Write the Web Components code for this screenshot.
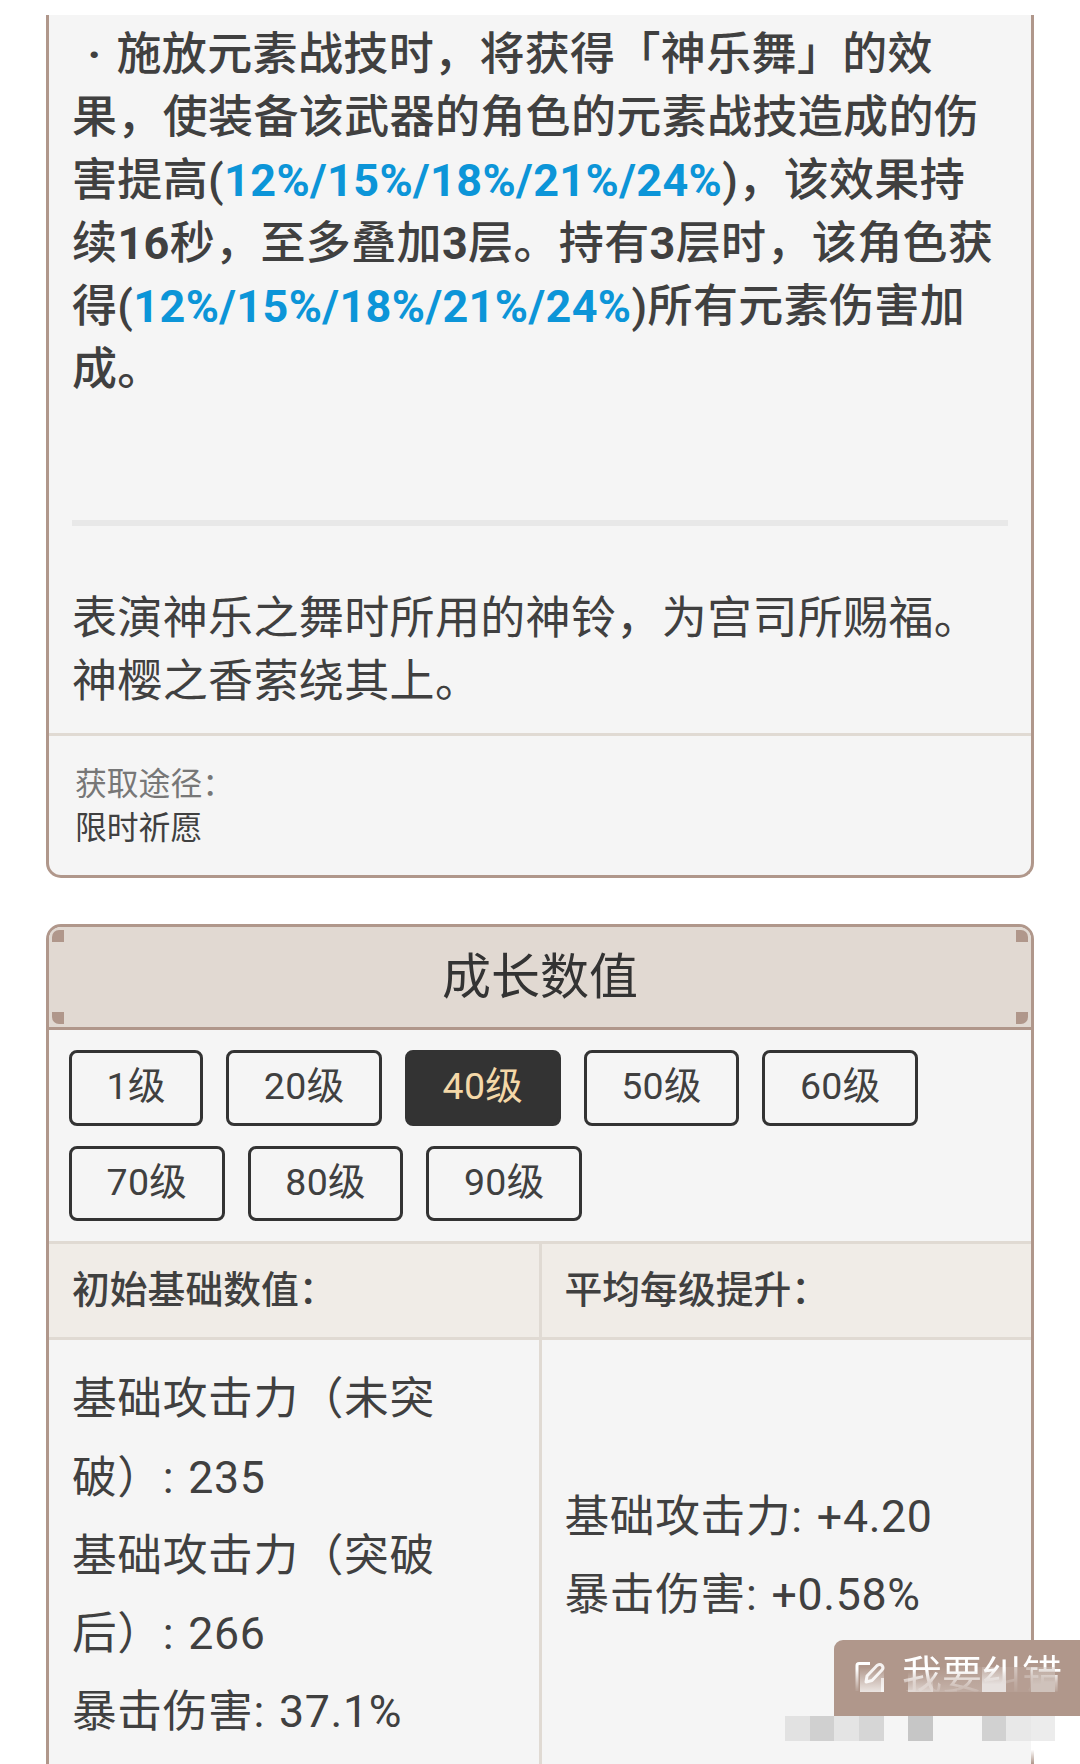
<!DOCTYPE html>
<html lang="zh-CN">
<head>
<meta charset="utf-8">
<title>成长数值</title>
<style>
    body {
        margin: 0;
        width: 1080px;
        height: 1764px;
        overflow: hidden;
        position: relative;
        background: #fff;
        color: #404040;
        font-family: Roboto, "Noto Sans CJK SC", sans-serif;
    }
    main {
        display: flex;
        flex-direction: column;
        gap: 46px;
        padding: 15px 46px 0;
    }
    b {
        color: #0c95d8;
    }
    .dot {
        margin: 0 15px 0 4px;
        font-weight: 700;
    }
</style>
</head>
<body>
<main>
    <weapon-card>
        <span slot="effect">&nbsp;<span class="dot">·</span>施放元素战技时，将获得「神乐舞」的效<br>果，使装备该武器的角色的元素战技造成的伤<br>害提高(<b>12%/15%/18%/21%/24%</b>)，该效果持<br>续<strong>16</strong>秒，至多叠加<strong>3</strong>层。持有<strong>3</strong>层时，该角色获<br>得(<b>12%/15%/18%/21%/24%</b>)所有元素伤害加<br>成。</span>
        <span slot="story">表演神乐之舞时所用的神铃，为宫司所赐福。<br>神樱之香萦绕其上。</span>
        <span slot="source-label">获取途径：</span>
        <span slot="source">限时祈愿</span>
    </weapon-card>
    <growth-card heading="成长数值">
        <level-tab slot="tabs">1级</level-tab>
        <level-tab slot="tabs">20级</level-tab>
        <level-tab slot="tabs" active>40级</level-tab>
        <level-tab slot="tabs">50级</level-tab>
        <level-tab slot="tabs">60级</level-tab>
        <level-tab slot="tabs">70级</level-tab>
        <level-tab slot="tabs">80级</level-tab>
        <level-tab slot="tabs">90级</level-tab>
        <stat-column label="初始基础数值：">基础攻击力（未突<br>破）: 235<br>基础攻击力（突破<br>后）: 266<br>暴击伤害: 37.1%</stat-column>
        <stat-column label="平均每级提升：">基础攻击力: +4.20<br>暴击伤害: +0.58%</stat-column>
    </growth-card>
</main>
<report-button>我要纠错</report-button>

<script>
class WeaponCard extends HTMLElement {
    constructor() {
        super();
        this.shadowDOM = this.attachShadow({ mode: "open" });
        this.render();
    }

    render() {
        this.shadowDOM.innerHTML = `
        <style>
        :host {
            display: block;
            box-sizing: border-box;
            height: 863px;
            border: 3px solid #b0978b;
            border-top: none;
            border-radius: 0 0 15px 15px;
            background: #f5f5f5;
            white-space: nowrap;
        }
        .body {
            box-sizing: border-box;
            height: 718px;
            padding: 8px 23px 0;
            font-size: 45px;
            letter-spacing: 0.36px;
            line-height: 63px;
        }
        .effect {
            height: 497px;
            font-weight: 500;
        }
        hr {
            height: 6px;
            margin: 0 0 61px;
            border: none;
            background: #e8e8e8;
        }
        .source {
            padding: 26px 26px 0;
            border-top: 3px solid #e0dad3;
            font-size: 31.8px;
            line-height: 44px;
        }
        .label {
            color: #777;
        }
        </style>
        <div class="body">
            <div class="effect"><slot name="effect"></slot></div>
            <hr>
            <div class="story"><slot name="story"></slot></div>
        </div>
        <div class="source">
            <div class="label"><slot name="source-label"></slot></div>
            <div><slot name="source"></slot></div>
        </div>
        `;
    }
}

class GrowthCard extends HTMLElement {
    constructor() {
        super();
        this.shadowDOM = this.attachShadow({ mode: "open" });
    }

    connectedCallback() {
        this.render();
    }

    render() {
        this.shadowDOM.innerHTML = `
        <style>
        :host {
            display: block;
            border: 3px solid #b0978b;
            border-radius: 15px 15px 0 0;
            background: #f5f5f5;
            overflow: hidden;
        }
        header {
            display: flex;
            justify-content: space-between;
            height: 94px;
            padding: 3px;
            border-bottom: 3px solid #b0978b;
            background: #e1d9d2;
        }
        h2 {
            margin: 0;
            color: #333;
            font-size: 49px;
            font-weight: 400;
            line-height: 96px;
        }
        .ends {
            display: flex;
            flex-direction: column;
            justify-content: space-between;
        }
        .ends i {
            width: 12px;
            height: 12px;
            background: #b0978b;
        }
        .left i:first-child { border-top-left-radius: 7px; }
        .left i:last-child { border-bottom-left-radius: 7px; }
        .right i:first-child { border-top-right-radius: 7px; }
        .right i:last-child { border-bottom-right-radius: 7px; }
        .tabs {
            display: flex;
            flex-wrap: wrap;
            gap: 20px 23px;
            padding: 20px;
        }
        .table {
            display: grid;
            grid-template-columns: 492.5px 1fr;
            height: 531px;
            border-top: 3px solid #e0dad3;
        }
        </style>
        <header>
            <div class="ends left"><i></i><i></i></div>
            <h2>${this.getAttribute("heading")}</h2>
            <div class="ends right"><i></i><i></i></div>
        </header>
        <div class="tabs"><slot name="tabs"></slot></div>
        <div class="table"><slot></slot></div>
        `;
    }
}

class LevelTab extends HTMLElement {
    constructor() {
        super();
        this.shadowDOM = this.attachShadow({ mode: "open" });
        this.shadowDOM.innerHTML = `
        <style>
        :host {
            box-sizing: border-box;
            display: block;
            height: 75.5px;
            padding: 0 34.5px;
            border: 3px solid #333;
            border-radius: 8px;
            font-size: 37.5px;
            letter-spacing: 0.35px;
            line-height: 67px;
            white-space: nowrap;
        }
        :host([active]) {
            background: #333;
            color: #f4d8a8;
        }
        </style>
        <slot></slot>
        `;
    }
}

class StatColumn extends HTMLElement {
    constructor() {
        super();
        this.shadowDOM = this.attachShadow({ mode: "open" });
    }

    connectedCallback() {
        this.shadowDOM.innerHTML = `
        <style>
        :host {
            display: flex;
            flex-direction: column;
            white-space: nowrap;
        }
        :host(:first-of-type) {
            border-right: 3px solid #e0dad3;
        }
        .head {
            height: 93px;
            padding-left: 23px;
            border-bottom: 3px solid #e0dad3;
            background: #f0ece7;
            font-size: 37.8px;
            font-weight: 500;
            line-height: 93px;
        }
        .values {
            flex: 1;
            display: flex;
            align-items: center;
            padding: 0 0 3px 23px;
            font-size: 44.7px;
            letter-spacing: 0.66px;
            word-spacing: 2.4px;
            line-height: 78.2px;
        }
        </style>
        <div class="head">${this.getAttribute("label")}</div>
        <div class="values"><div><slot></slot></div></div>
        `;
    }
}

class ReportButton extends HTMLElement {
    constructor() {
        super();
        this.shadowDOM = this.attachShadow({ mode: "open" });
        // mosaic tiles over the button and under it: x, y, width, fill
        const tiles = [
            [74, 27, 25, "linear-gradient(#fff0 20%, #fff9)"],
            [99, 27, 24, "linear-gradient(#fff0, #fff4)"],
            [123, 27, 25, "linear-gradient(#fff1, #fff3)"],
            [148, 27, 24, "linear-gradient(#fff3, #e6e0de 70%)"],
            [172, 27, 25, "#b9a298aa"],
            [197, 27, 24, "linear-gradient(#cfc2bb66, #cfc2bb 70%)"],
            [-49, 76, 25, "#e2e2e2"],
            [-24, 76, 24, "#d0d0d0"],
            [0, 76, 25, "#e4e4e4"],
            [25, 76, 25, "#d6d6d6"],
            [74, 76, 25, "#c6c6c6"],
            [148, 76, 24, "#d1d1d1"],
            [172, 76, 25, "#e8e8e8"],
            [197, 76, 24, "#ececec"]
        ];
        this.shadowDOM.innerHTML = `
        <style>
        :host {
            position: absolute;
            left: 834px;
            top: 1640px;
            width: 246px;
            height: 76px;
            color: #fff;
        }
        .button {
            display: flex;
            align-items: center;
            gap: 15px;
            height: 72px;
            padding: 0 0 4px 21px;
            border-radius: 9px 0 0 0;
            background: #b0978b;
            font-size: 40px;
            white-space: nowrap;
        }
        .text {
            line-height: 66px;
            -webkit-mask-image: linear-gradient(#000 42%, #0006 60%, #0002 73%, #0000 74%);
            mask-image: linear-gradient(#000 42%, #0006 60%, #0002 73%, #0000 74%);
        }
        .cover {
            position: absolute;
            left: 197px;
            top: 76px;
            width: 49px;
            height: 48px;
            background: linear-gradient(#fff 70%, #fff0);
        }
        .tile {
            position: absolute;
            height: 25px;
        }
        </style>
        <div class="button">
            <svg width="32" height="34" viewBox="0 0 32 34" fill="none" stroke-width="3">
                <defs>
                    <linearGradient id="fill" x1="0" y1="0" x2="0" y2="1">
                        <stop offset="0" stop-color="#fff" stop-opacity="0"/>
                        <stop offset="1" stop-color="#fff" stop-opacity="0.75"/>
                    </linearGradient>
                    <linearGradient id="edge" gradientUnits="userSpaceOnUse" x1="0" y1="10" x2="0" y2="31">
                        <stop offset="0" stop-color="#fff"/>
                        <stop offset="1" stop-color="#fff" stop-opacity="0.1"/>
                    </linearGradient>
                </defs>
                <rect x="5" y="8" width="24" height="25" fill="url(#fill)"/>
                <path d="M15 4.500H4Q2 4.500 2 6.500V32" stroke="url(#edge)"/>
                <path d="M27.500 19V33" stroke="#fffa"/>
                <path d="M11 23L12 17L22 6.500Q25 4.500 27 6.500Q29 9 27 11L17 21.500Z" stroke="#fffd" stroke-linejoin="round"/>
            </svg>
            <div class="text"><slot></slot></div>
        </div>
        <div class="cover"></div>
        ${tiles.map(([x, y, w, fill]) => `<div class="tile" style="left:${x}px;top:${y}px;width:${w}px;background:${fill}"></div>`).join("")}
        `;
    }
}

customElements.define("weapon-card", WeaponCard);
customElements.define("growth-card", GrowthCard);
customElements.define("level-tab", LevelTab);
customElements.define("stat-column", StatColumn);
customElements.define("report-button", ReportButton);
</script>
</body>
</html>
